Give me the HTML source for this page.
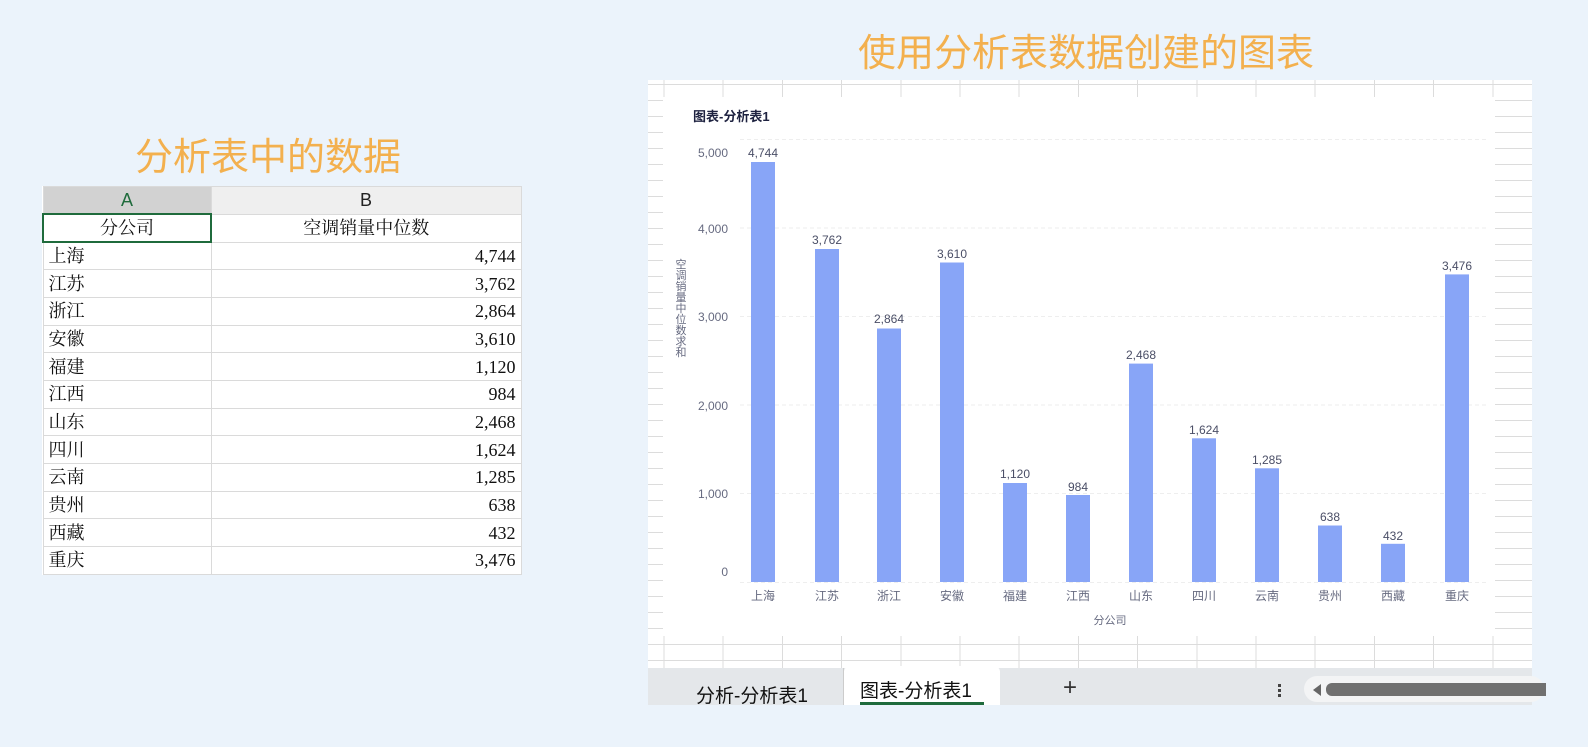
<!DOCTYPE html>
<html><head><meta charset="utf-8"><style>
*{margin:0;padding:0;box-sizing:border-box}
body{width:1588px;height:747px;background:#ebf3fb;position:relative;overflow:hidden;font-family:"Liberation Sans","Noto Sans CJK SC",sans-serif}
.t{position:absolute;color:#f3b04e;font-size:38px;white-space:nowrap}
table{position:absolute;left:42px;top:186px;border-collapse:collapse;background:#fff;font-family:"Liberation Serif","Noto Serif CJK SC",serif;font-size:18px;color:#111}
td{border:1px solid #dadada;height:27.7px;padding:0 5px;line-height:26px}
td.a{width:168px}td.b{width:310px;text-align:right}
tr.h td{background:#efefef;text-align:center;font-family:"Liberation Sans","Noto Sans CJK SC",sans-serif;height:26px;color:#222}
tr.h td.a{background:#d2d2d2;color:#1f6b3c;text-align:center;border-bottom:1px solid #aaa}
.panel{position:absolute;left:648px;top:80px;width:884px;height:625px;background-color:#fff;
background-image:repeating-linear-gradient(90deg,transparent 0 15.5px,#dcdcdc 15.5px 16.5px,transparent 16.5px 59.2px),repeating-linear-gradient(180deg,transparent 0 4px,#dcdcdc 4px 5px,transparent 5px 16px)}
.chart{position:absolute;left:663px;top:97px;width:832px;height:539px;background:#fff}
.tabs{position:absolute;left:648px;top:668px;width:884px;height:37px;background:#e4e7ea}
</style></head><body>
<div class="t" style="left:135px;top:126px">分析表中的数据</div>
<div class="t" style="left:858px;top:22px">使用分析表数据创建的图表</div>
<table>
<tr class="h"><td class="a">A</td><td class="b" style="text-align:center">B</td></tr>
<tr><td class="a" style="text-align:center;border:2px solid #1f6b3c">分公司</td><td class="b" style="text-align:center">空调销量中位数</td></tr>
<tr><td class="a">上海</td><td class="b">4,744</td></tr>
<tr><td class="a">江苏</td><td class="b">3,762</td></tr>
<tr><td class="a">浙江</td><td class="b">2,864</td></tr>
<tr><td class="a">安徽</td><td class="b">3,610</td></tr>
<tr><td class="a">福建</td><td class="b">1,120</td></tr>
<tr><td class="a">江西</td><td class="b">984</td></tr>
<tr><td class="a">山东</td><td class="b">2,468</td></tr>
<tr><td class="a">四川</td><td class="b">1,624</td></tr>
<tr><td class="a">云南</td><td class="b">1,285</td></tr>
<tr><td class="a">贵州</td><td class="b">638</td></tr>
<tr><td class="a">西藏</td><td class="b">432</td></tr>
<tr><td class="a">重庆</td><td class="b">3,476</td></tr>
</table>
<div class="panel"></div>
<div class="chart"></div>
<svg style="position:absolute;left:0;top:0" width="1588" height="747" font-family="Liberation Sans,Noto Sans CJK SC,sans-serif">
<text x="693" y="121" font-size="13" font-weight="bold" fill="#1e2240">图表-分析表1</text>
<g stroke="#eeeeee" stroke-dasharray="4 3">
<line x1="740" x2="1487" y1="139.5" y2="139.5"/><line x1="740" x2="1487" y1="228" y2="228"/><line x1="740" x2="1487" y1="316.5" y2="316.5"/><line x1="740" x2="1487" y1="405" y2="405"/><line x1="740" x2="1487" y1="493.5" y2="493.5"/><line x1="740" x2="1487" y1="582.5" y2="582.5"/>
</g>
<g font-size="12" fill="#666a80" text-anchor="end">
<text x="728" y="157">5,000</text><text x="728" y="233">4,000</text><text x="728" y="321">3,000</text><text x="728" y="410">2,000</text><text x="728" y="498">1,000</text><text x="728" y="576">0</text>
</g>
<g font-size="11" fill="#666a80" text-anchor="middle">
<text x="680" y="308" writing-mode="tb">空调销量中位数求和</text>
<text x="1110" y="624">分公司</text>
</g>
<g fill="#88a5f7">
<rect x="751" y="162" width="24" height="420"/><rect x="815" y="249" width="24" height="333"/><rect x="877" y="328.5" width="24" height="253.5"/><rect x="940" y="262.5" width="24" height="319.5"/><rect x="1003" y="483" width="24" height="99"/><rect x="1066" y="495" width="24" height="87"/><rect x="1129" y="363.6" width="24" height="218.4"/><rect x="1192" y="438.3" width="24" height="143.7"/><rect x="1255" y="468.3" width="24" height="113.7"/><rect x="1318" y="525.5" width="24" height="56.5"/><rect x="1381" y="543.8" width="24" height="38.2"/><rect x="1445" y="274.4" width="24" height="307.6"/>
</g>
<g font-size="12" fill="#4a4e66" text-anchor="middle">
<text x="763" y="157">4,744</text><text x="827" y="244">3,762</text><text x="889" y="323">2,864</text><text x="952" y="258">3,610</text><text x="1015" y="478">1,120</text><text x="1078" y="491">984</text><text x="1141" y="359">2,468</text><text x="1204" y="434">1,624</text><text x="1267" y="464">1,285</text><text x="1330" y="521">638</text><text x="1393" y="540">432</text><text x="1457" y="270">3,476</text>
</g>
<g font-size="12" fill="#666a80" text-anchor="middle">
<text x="763" y="600">上海</text><text x="827" y="600">江苏</text><text x="889" y="600">浙江</text><text x="952" y="600">安徽</text><text x="1015" y="600">福建</text><text x="1078" y="600">江西</text><text x="1141" y="600">山东</text><text x="1204" y="600">四川</text><text x="1267" y="600">云南</text><text x="1330" y="600">贵州</text><text x="1393" y="600">西藏</text><text x="1457" y="600">重庆</text>
</g>
</svg>
<div class="tabs">
<div style="position:absolute;left:0;top:0;width:196px;height:37px;border-right:1px solid #ccc"></div>
<div style="position:absolute;left:48px;top:13px;font-size:19px;color:#111">分析-分析表1</div>
<div style="position:absolute;left:196px;top:-2px;width:156px;height:39px;background:#fff;border-radius:6px 6px 0 0"></div>
<div style="position:absolute;left:212px;top:8px;font-size:19px;color:#111">图表-分析表1</div>
<div style="position:absolute;left:212px;top:34px;width:124px;height:3px;background:#1f6b3c"></div>
<div style="position:absolute;left:415px;top:6px;font-size:24px;color:#333">+</div>
<div style="position:absolute;left:630px;top:16px;width:3px;height:3px;background:#444;box-shadow:0 5px #444,0 10px #444"></div>
<div style="position:absolute;left:656px;top:8px;width:240px;height:26px;background:#f3f4f5;border-radius:13px"></div>
<div style="position:absolute;left:665px;top:16px;width:0;height:0;border-top:6px solid transparent;border-bottom:6px solid transparent;border-right:8px solid #666"></div>
<div style="position:absolute;left:678px;top:15px;width:220px;height:13px;background:#707070;border-radius:6px 0 0 6px"></div>
</div>
</body></html>
